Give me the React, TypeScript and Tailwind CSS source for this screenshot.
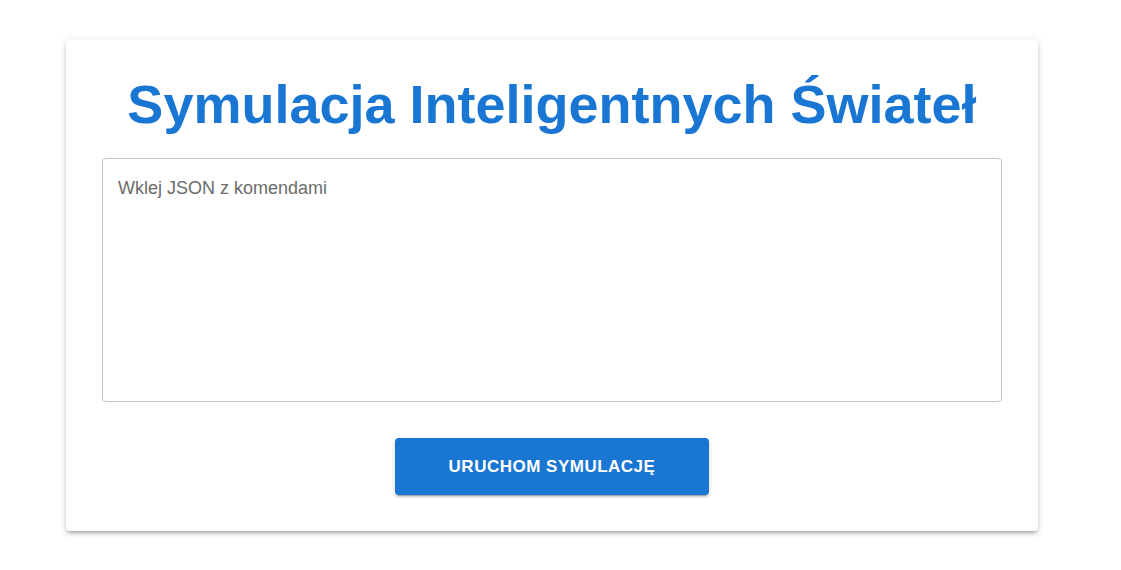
export default function App() {
  return (
    <div
      className="min-h-[570px] bg-white pt-[40px]"
      style={{ fontFamily: '"Liberation Sans", Arial, sans-serif' }}
    >
      <div className="ml-[66px] w-[972px] rounded-[4px] bg-white px-[36px] pt-[36px] pb-[36px] shadow-[0_3px_3px_-2px_rgba(0,0,0,0.2),0_3px_4px_0_rgba(0,0,0,0.14),0_1px_8px_0_rgba(0,0,0,0.12)]">
        <h1 className="text-center text-[54px] font-bold leading-[56px] text-[#1976d2]">
          Symulacja Inteligentnych Świateł
        </h1>
        <textarea
          placeholder="Wklej JSON z komendami"
          className="mt-[26px] block h-[244px] w-[900px] resize-none rounded-[4px] border border-[#c4c4c4] px-[15px] py-[17px] text-[18px] leading-[24px] text-[#333] placeholder:text-[#6b6b6b] outline-none"
        />
        <div className="mt-[36px] flex justify-center">
          <button className="h-[57px] w-[314px] rounded-[4px] bg-[#1976d2] text-[17px] font-bold uppercase tracking-[0.5px] text-white shadow-[0_3px_1px_-2px_rgba(0,0,0,0.2),0_2px_2px_0_rgba(0,0,0,0.14),0_1px_5px_0_rgba(0,0,0,0.12)]">
            Uruchom symulację
          </button>
        </div>
      </div>
    </div>
  );
}
